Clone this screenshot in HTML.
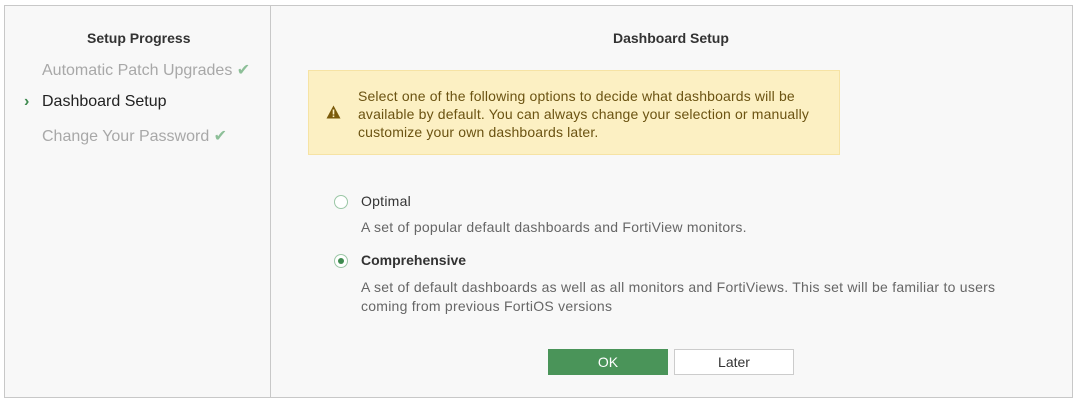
<!DOCTYPE html>
<html><head><style>
body{margin:0;width:1077px;height:403px;background:#fff;font-family:"Liberation Sans",sans-serif;position:relative;overflow:hidden}
.box{position:absolute;left:4px;top:5px;width:1067px;height:391px;border:1px solid #c8c8c8;background:#f8f8f8}
.div{position:absolute;left:270px;top:5px;width:1px;height:393px;background:#c8c8c8}
.a{position:absolute;white-space:nowrap}
.warn{position:absolute;left:308px;top:70px;width:530px;height:83px;background:#fcf0c3;border:1px solid #f6e3a4}
.warn p{position:absolute;left:49px;top:16px;margin:0;font-size:14px;line-height:18px;color:#6b5312;width:475px;letter-spacing:0.15px}
.radio{position:absolute;width:12px;height:12px;border:1px solid #9bc7a6;border-radius:50%;background:#fff}
.btn{position:absolute;top:349px;width:120px;height:26px;font-size:14px;text-align:center;line-height:26px;box-sizing:border-box}
.d{letter-spacing:0.25px}
</style></head><body>
<div class="box"></div><div class="div"></div>
<div class="a" style="left:87px;top:30px;font-size:14px;font-weight:bold;color:#333">Setup Progress</div>
<div class="a" style="left:42px;top:60px;font-size:16px;color:#a8a8a8">Automatic Patch Upgrades <span style="color:#8dbf98">✔</span></div>
<div class="a" style="left:24px;top:93px;font-size:16px;color:#3e8a4f;font-weight:bold">›</div>
<div class="a" style="left:42px;top:93px;font-size:16px;color:#222">Dashboard Setup</div>
<div class="a" style="left:42px;top:126px;font-size:16px;color:#a8a8a8">Change Your Password <span style="color:#8dbf98">✔</span></div>
<div class="a" style="left:613px;top:30px;font-size:14px;font-weight:bold;color:#333">Dashboard Setup</div>
<div class="warn">
<svg style="position:absolute;left:17px;top:34px" width="15" height="14" viewBox="0 0 15 14"><path d="M7.5 0.5L14.5 13.5H0.5Z" fill="#7a5a0a"/><rect x="6.7" y="4.5" width="1.6" height="5" fill="#fcf0c3"/><rect x="6.7" y="10.5" width="1.6" height="1.6" fill="#fcf0c3"/></svg>
<p>Select one of the following options to decide what dashboards will be available by default. You can always change your selection or manually customize your own dashboards later.</p></div>
<div class="radio" style="left:334px;top:195px"></div>
<div class="a d" style="left:361px;top:193px;font-size:14px;color:#333">Optimal</div>
<div class="a d" style="left:361px;top:219px;font-size:14px;color:#666">A set of popular default dashboards and FortiView monitors.</div>
<div class="radio" style="left:334px;top:254px"><div style="position:absolute;left:3px;top:3px;width:6px;height:6px;border-radius:50%;background:#3e8a4f"></div></div>
<div class="a" style="left:361px;top:252px;font-size:14px;font-weight:bold;color:#333">Comprehensive</div>
<div class="a d" style="left:361px;top:278px;font-size:14px;line-height:19px;color:#666">A set of default dashboards as well as all monitors and FortiViews. This set will be familiar to users<br>coming from previous FortiOS versions</div>
<div class="btn" style="left:548px;background:#4a9459;color:#fff">OK</div>
<div class="btn" style="left:674px;background:#fff;border:1px solid #ccc;color:#333;line-height:24px">Later</div>
</body></html>
